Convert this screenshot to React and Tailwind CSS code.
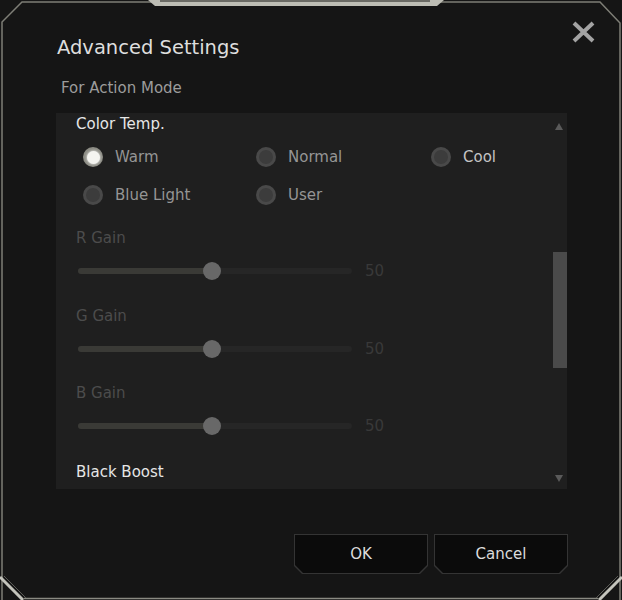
import React from "react";

const font = { fontFamily: '"DejaVu Sans", "Liberation Sans", sans-serif' };

function Radio({ label, checked, bright }) {
    return (
        <div className="flex items-center h-[20px] gap-[12px]">
            {checked ? (
                <span className="w-[20px] h-[20px] rounded-full bg-[#8c8c84] flex items-center justify-center">
                    <span className="w-[13px] h-[13px] rounded-full bg-[#f4f4f0] shadow-[0_0_3px_#fff]" />
                </span>
            ) : (
                <span className="w-[20px] h-[20px] rounded-full bg-[#494949] flex items-center justify-center">
                    <span className="w-[14px] h-[14px] rounded-full bg-[#3c3c3c]" />
                </span>
            )}
            <span className={`text-[15px] leading-[20px] ${bright ? "text-[#c4c4c4]" : "text-[#959595]"}`}>
                {label}
            </span>
        </div>
    );
}

function GainSlider({ label, className }) {
    return (
        <div className={className}>
            <div className="h-[20px] text-[15px] leading-[20px] text-[#4c4c4c]">{label}</div>
            <div className="mt-[13px] h-[20px] flex items-center">
                <div className="relative ml-[2px] w-[274px] h-[6px] rounded-full bg-[#262626]">
                    <div className="absolute left-0 top-0 h-[6px] w-[133px] rounded-full bg-[#3a3a36]" />
                    <div className="absolute left-[125px] top-[-6px] w-[18px] h-[18px] rounded-full bg-[#686868]" />
                </div>
                <span className="ml-[13px] text-[15px] leading-[20px] text-[#393939]">50</span>
            </div>
        </div>
    );
}

function DialogButton({ children }) {
    const clip = "[clip-path:polygon(0_0,100%_0,100%_calc(100%-8px),calc(100%-8px)_100%,8px_100%,0_calc(100%-8px))]";
    return (
        <div className={`w-[134px] h-[40px] p-[1px] bg-[#343434] ${clip}`}>
            <div className={`w-full h-full bg-[#0b0b0b] flex items-center justify-center text-[15px] text-[#dcdcdc] ${clip}`}>
                {children}
            </div>
        </div>
    );
}

export default function App() {
    return (
        <div className="relative w-[622px] h-[600px] bg-[#151515] overflow-hidden" style={font}>
            {/* frame drawing */}
            <svg className="absolute inset-0 pointer-events-none" width="622" height="600" viewBox="0 0 622 600">
                <path d="M2 600 L2 22 L22 2 L600 2 L620 23 L620 600" fill="none" stroke="#7e7e76" strokeWidth="1.5" />
                <path d="M24 598.5 L598 598.5" stroke="#8a8a82" strokeWidth="1.5" />
                <polygon points="148,0 444,0 437,6 155,6" fill="#bdbdb4" />
                <rect x="160" y="0" width="270" height="2" fill="#6a6a64" />
                <path d="M0 577 L23 600" stroke="#c4c4bc" strokeWidth="3" />
                <path d="M4 576 L26 598" stroke="#5a5a56" strokeWidth="1" />
                <path d="M622 577 L599 600" stroke="#c4c4bc" strokeWidth="3" />
                <path d="M618 576 L596 598" stroke="#5a5a56" strokeWidth="1" />
            </svg>

            {/* close */}
            <svg className="absolute left-[571px] top-[21px]" width="25" height="22" viewBox="0 0 25 22">
                <path d="M3 2 L22 20 M22 2 L3 20" stroke="#a3a3a3" strokeWidth="4" strokeLinecap="butt" />
            </svg>

            <div className="pt-[36px] pl-[57px] h-[24px] box-content text-[19.5px] leading-[24px] text-[#dedede]">
                Advanced Settings
            </div>
            <div className="mt-[18px] pl-[61px] h-[20px] text-[15px] leading-[20px] text-[#9c9c9c]">
                For Action Mode
            </div>

            {/* settings panel */}
            <div className="relative mt-[15px] ml-[56px] w-[511px] h-[376px] bg-[#1f1f1f] overflow-hidden">
                <div className="pl-[20px] pt-[1px]">
                    <div className="h-[20px] text-[15px] leading-[20px] text-[#e6e6e6]">Color Temp.</div>
                    <div className="mt-[13px] pl-[7px] grid grid-cols-[173px_175px_auto] gap-y-[18px]">
                        <Radio label="Warm" checked />
                        <Radio label="Normal" />
                        <Radio label="Cool" bright />
                        <Radio label="Blue Light" />
                        <Radio label="User" />
                    </div>
                    <GainSlider label="R Gain" className="mt-[23px]" />
                    <GainSlider label="G Gain" className="mt-[25px]" />
                    <GainSlider label="B Gain" className="mt-[24px]" />
                    <div className="mt-[26px] h-[20px] text-[15px] leading-[20px] text-[#e6e6e6]">Black Boost</div>
                </div>

                {/* scrollbar */}
                <svg className="absolute right-[4px] top-[9px]" width="8" height="8" viewBox="0 0 8 8">
                    <polygon points="4,1 8,8 0,8" fill="#5a5a5a" />
                </svg>
                <div className="absolute right-0 top-[139px] w-[14px] h-[116px] bg-[#4a4a4a]" />
                <svg className="absolute right-[4px] top-[362px]" width="8" height="8" viewBox="0 0 8 8">
                    <polygon points="0,0 8,0 4,7" fill="#5a5a5a" />
                </svg>
            </div>

            {/* buttons */}
            <div className="mt-[45px] pr-[54px] flex justify-end gap-[6px]">
                <DialogButton>OK</DialogButton>
                <DialogButton>Cancel</DialogButton>
            </div>
        </div>
    );
}
